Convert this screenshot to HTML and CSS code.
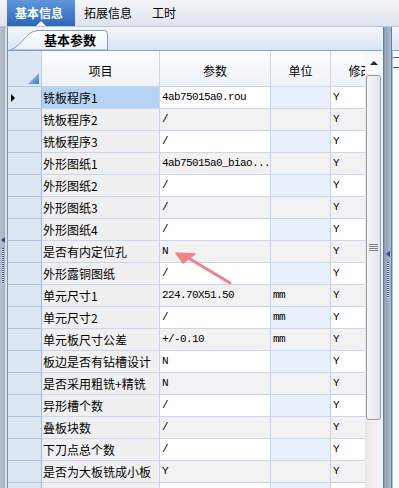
FILE: index.html
```html
<!DOCTYPE html>
<html lang="zh">
<head>
    <meta charset="UTF-8">
    <title>基本信息</title>
    <link rel="stylesheet" href="styles.css">
</head>
<body>
    <div class="topbar">
        <div class="tab on">基本信息</div>
        <div class="tab">拓展信息</div>
        <div class="tab">工时</div>
    </div>

    <div class="main">
        <div class="lsplit">
            <span class="grip-arrow"></span>
            <span class="grip-dots"></span>
        </div>

        <div class="panel">
            <div class="strip">
                <div class="subtab">
                    <svg class="subtab-bg" width="100" height="20" viewBox="0 0 100 20">
                        <defs>
                            <linearGradient id="tabfill" x1="0" y1="0" x2="0" y2="1">
                                <stop offset="0" stop-color="#ffffff"/>
                                <stop offset="1" stop-color="#edf2fa"/>
                            </linearGradient>
                        </defs>
                        <path d="M1,20 C8,18 14,10 20,4 Q24,0.5 29,0.5 L95,0.5 Q98.5,0.5 98.5,4 L98.5,20 Z" fill="url(#tabfill)" stroke="#7d9ccb" stroke-width="1"/>
                    </svg>
                    <span class="subtab-text">基本参数</span>
                </div>
            </div>

            <div class="gridwrap">
                <div class="grid">
                    <div class="row head">
                        <div class="cell rh corner"></div>
                        <div class="cell">项目</div>
                        <div class="cell">参数</div>
                        <div class="cell">单位</div>
                        <div class="cell">修改</div>
                    </div>

                    <div class="row sel">
                        <div class="cell rh"><span class="cur"></span></div>
                        <div class="cell name">铣板程序1</div>
                        <div class="cell val">4ab75015a0.rou</div>
                        <div class="cell unit"></div>
                        <div class="cell mod">Y</div>
                    </div>
                    <div class="row">
                        <div class="cell rh"></div>
                        <div class="cell name">铣板程序2</div>
                        <div class="cell val">/</div>
                        <div class="cell unit"></div>
                        <div class="cell mod">Y</div>
                    </div>
                    <div class="row">
                        <div class="cell rh"></div>
                        <div class="cell name">铣板程序3</div>
                        <div class="cell val">/</div>
                        <div class="cell unit"></div>
                        <div class="cell mod">Y</div>
                    </div>
                    <div class="row">
                        <div class="cell rh"></div>
                        <div class="cell name">外形图纸1</div>
                        <div class="cell val">4ab75015a0_biao...</div>
                        <div class="cell unit"></div>
                        <div class="cell mod">Y</div>
                    </div>
                    <div class="row">
                        <div class="cell rh"></div>
                        <div class="cell name">外形图纸2</div>
                        <div class="cell val">/</div>
                        <div class="cell unit"></div>
                        <div class="cell mod">Y</div>
                    </div>
                    <div class="row">
                        <div class="cell rh"></div>
                        <div class="cell name">外形图纸3</div>
                        <div class="cell val">/</div>
                        <div class="cell unit"></div>
                        <div class="cell mod">Y</div>
                    </div>
                    <div class="row">
                        <div class="cell rh"></div>
                        <div class="cell name">外形图纸4</div>
                        <div class="cell val">/</div>
                        <div class="cell unit"></div>
                        <div class="cell mod">Y</div>
                    </div>
                    <div class="row">
                        <div class="cell rh"></div>
                        <div class="cell name">是否有内定位孔</div>
                        <div class="cell val">N</div>
                        <div class="cell unit"></div>
                        <div class="cell mod">Y</div>
                    </div>
                    <div class="row">
                        <div class="cell rh"></div>
                        <div class="cell name">外形露铜图纸</div>
                        <div class="cell val">/</div>
                        <div class="cell unit"></div>
                        <div class="cell mod">Y</div>
                    </div>
                    <div class="row">
                        <div class="cell rh"></div>
                        <div class="cell name">单元尺寸1</div>
                        <div class="cell val">224.70X51.50</div>
                        <div class="cell unit">mm</div>
                        <div class="cell mod">Y</div>
                    </div>
                    <div class="row">
                        <div class="cell rh"></div>
                        <div class="cell name">单元尺寸2</div>
                        <div class="cell val">/</div>
                        <div class="cell unit">mm</div>
                        <div class="cell mod">Y</div>
                    </div>
                    <div class="row">
                        <div class="cell rh"></div>
                        <div class="cell name">单元板尺寸公差</div>
                        <div class="cell val">+/-0.10</div>
                        <div class="cell unit">mm</div>
                        <div class="cell mod">Y</div>
                    </div>
                    <div class="row">
                        <div class="cell rh"></div>
                        <div class="cell name">板边是否有钻槽设计</div>
                        <div class="cell val">N</div>
                        <div class="cell unit"></div>
                        <div class="cell mod">Y</div>
                    </div>
                    <div class="row">
                        <div class="cell rh"></div>
                        <div class="cell name">是否采用粗铣+精铣</div>
                        <div class="cell val">N</div>
                        <div class="cell unit"></div>
                        <div class="cell mod">Y</div>
                    </div>
                    <div class="row">
                        <div class="cell rh"></div>
                        <div class="cell name">异形槽个数</div>
                        <div class="cell val">/</div>
                        <div class="cell unit"></div>
                        <div class="cell mod">Y</div>
                    </div>
                    <div class="row">
                        <div class="cell rh"></div>
                        <div class="cell name">叠板块数</div>
                        <div class="cell val">/</div>
                        <div class="cell unit"></div>
                        <div class="cell mod">Y</div>
                    </div>
                    <div class="row">
                        <div class="cell rh"></div>
                        <div class="cell name">下刀点总个数</div>
                        <div class="cell val">/</div>
                        <div class="cell unit"></div>
                        <div class="cell mod">Y</div>
                    </div>
                    <div class="row">
                        <div class="cell rh"></div>
                        <div class="cell name">是否为大板铣成小板</div>
                        <div class="cell val">Y</div>
                        <div class="cell unit"></div>
                        <div class="cell mod">Y</div>
                    </div>
                    <div class="row">
                        <div class="cell rh"></div>
                        <div class="cell name"></div>
                        <div class="cell val"></div>
                        <div class="cell unit"></div>
                        <div class="cell mod"></div>
                    </div>

                    <!-- annotation arrow pointing at the N -->
                    <svg class="note-arrow" width="357" height="437" viewBox="0 0 357 437">
                        <line x1="222" y1="232" x2="182" y2="208" stroke="#ee8489" stroke-width="3" stroke-linecap="round"/>
                        <polygon points="168,202 187,203 175,212" fill="#ee8489" stroke="#ee8489" stroke-width="1.5" stroke-linejoin="round"/>
                    </svg>
                </div>

                <div class="vscroll">
                    <div class="sb-up"><span class="up-tri"></span></div>
                    <div class="sb-thumb">
                        <span class="sb-grip"></span>
                    </div>
                </div>
            </div>
        </div>

        <div class="rsplit">
            <span class="grip-arrow"></span>
            <span class="grip-dots"></span>
        </div>

        <div class="rpanel">
            <div class="rp-strip"></div>
            <div class="rp-body">
                <div class="rp-line"></div>
                <div class="rp-line"></div>
            </div>
        </div>
    </div>
</body>
</html>
```

FILE: styles.css
```css
body {
    margin: 0;
    width: 399px;
    height: 488px;
    overflow: hidden;
    font-family: "Noto Sans CJK SC", "Liberation Sans", sans-serif;
    font-size: 12px;
    color: #000;
    background: #dfe7f2;
}

/* top tab bar */
.topbar {
    display: flex;
    height: 26px;
    padding-left: 7px;
    border-bottom: 1px solid #bcc7d6;
    background: linear-gradient(#f3f5f9, #dde4ee);
}

.tab {
    position: relative;
    line-height: 26px;
    padding: 0 11px 0 9px;
}

.tab.on {
    width: 68px;
    box-sizing: border-box;
    padding: 0 0 0 8px;
    color: #fff;
    font-weight: bold;
    background: linear-gradient(#5f97dc, #2e66b7);
}

.tab.on::after {
    content: "";
    position: absolute;
    left: 29px;
    bottom: 0;
    border-left: 5px solid transparent;
    border-right: 5px solid transparent;
    border-bottom: 5px solid #f4f7fb;
}

.main {
    display: flex;
    height: 461px;
}

/* splitters */
.lsplit, .rsplit {
    display: flex;
    flex-direction: column;
    align-items: center;
    justify-content: center;
    gap: 5px;
}

.lsplit {
    width: 8px;
    padding-top: 6px;
    align-items: flex-start;
    box-sizing: border-box;
    background: linear-gradient(to right, #b6bfcb 0, #a7b1bf 5px, #d7dde5 5px, #d7dde5 7px, #8696ad 7px);
}

.lsplit .grip-arrow {
    margin-left: 1px;
}

.lsplit .grip-dots {
    margin-left: 2px;
}

.rsplit {
    width: 9px;
    box-sizing: border-box;
    padding-top: 33px;
    border-left: 1px solid #5a7fb6;
    border-right: 1px solid #5a7fb6;
    background: linear-gradient(to right, #8f9db2, #b1bbc8);
}

.grip-arrow {
    width: 0;
    height: 0;
    border-top: 3px solid transparent;
    border-bottom: 3px solid transparent;
    border-right: 4px solid #2f4d86;
}

.grip-dots {
    width: 2px;
    height: 36px;
    background: repeating-linear-gradient(#2f4d86 0, #2f4d86 1px, #e8edf4 1px, #e8edf4 2px);
}

/* centre panel */
.panel {
    width: 375px;
    box-sizing: border-box;
    border-right: 1px solid #eef3f9;
    display: flex;
    flex-direction: column;
}

.strip {
    height: 23px;
    display: flex;
    align-items: flex-end;
    padding-left: 1px;
    background: linear-gradient(#f4f7fc, #d9e4f3);
}

.subtab {
    position: relative;
    width: 100px;
    height: 20px;
}

.subtab-bg {
    position: absolute;
    left: 0;
    top: 0;
}

.subtab-text {
    position: relative;
    display: block;
    padding-left: 35px;
    line-height: 19px;
    font-size: 13px;
    font-weight: bold;
}

.gridwrap {
    flex: 1;
    display: flex;
    border-top: 1px solid #7c9fd0;
    background: #fff;
    overflow: hidden;
}

.grid {
    position: relative;
    width: 357px;
    overflow: hidden;
}

.row {
    display: grid;
    grid-template-columns: 34px 118px 111px 60px 60px;
    height: 22px;
}

.cell {
    box-sizing: border-box;
    border-right: 1px solid #c7d6ea;
    border-bottom: 1px solid #c7d6ea;
    padding-left: 2px;
    line-height: 21px;
    white-space: nowrap;
    overflow: hidden;
}

.head {
    height: 36px;
}

.head .cell {
    padding: 5px 0 0;
    line-height: 30px;
    text-align: center;
    background: linear-gradient(#fdfdfe, #eef2f7);
    border-right-color: #cdd8e6;
}

.cell.rh {
    padding: 0;
    background: #dce7f4;
    border-bottom-color: #b3c7e1;
    border-right-color: #a4bad8;
}

.head .cell.rh {
    position: relative;
    border-right-color: #c1cfe2;
}

.corner::after {
    content: "";
    position: absolute;
    right: 2px;
    bottom: 2px;
    width: 11px;
    height: 11px;
    background: linear-gradient(to bottom right, #cfe0f6, #3a72c2);
    clip-path: polygon(100% 0, 100% 100%, 0 100%);
}

.cur {
    display: inline-block;
    margin: 7px 0 0 3px;
    width: 0;
    height: 0;
    border-top: 4px solid transparent;
    border-bottom: 4px solid transparent;
    border-left: 4px solid #000;
    vertical-align: top;
}

.cell.name {
    padding-left: 1px;
    background: #f0f0f0;
}

.val, .unit, .mod {
    font-family: "Liberation Mono", monospace;
    font-size: 11px;
    letter-spacing: -0.6px;
}

.cell.unit {
    background: #e9f1fb;
}

.row:nth-child(odd):not(.head) .val,
.row:nth-child(odd):not(.head) .unit,
.row:nth-child(odd):not(.head) .mod {
    background: #f2f2f2;
}

.sel .cell.name {
    background: #b5d4f4;
}

.note-arrow {
    position: absolute;
    left: 0;
    top: 0;
    pointer-events: none;
}

/* vertical scrollbar */
.vscroll {
    width: 17px;
    display: flex;
    flex-direction: column;
    background: linear-gradient(to right, #e8e8e8, #f6f6f6);
}

.sb-up {
    height: 23px;
    display: flex;
    align-items: center;
    justify-content: center;
    background: #f7f8fa;
}

.up-tri {
    width: 0;
    height: 0;
    margin-top: 1px;
    border-left: 4px solid transparent;
    border-right: 4px solid transparent;
    border-bottom: 4px solid #222;
}

.sb-thumb {
    height: 345px;
    margin: 1px 0 0 1px;
    width: 15px;
    box-sizing: border-box;
    border: 1px solid #959da7;
    border-radius: 3px;
    background: linear-gradient(to right, #f5f6f7, #e2e5e9);
    display: flex;
    align-items: center;
    justify-content: center;
}

.sb-grip {
    width: 9px;
    height: 7px;
    background: repeating-linear-gradient(#7b838d 0, #7b838d 1px, transparent 1px, transparent 2px);
}

/* right panel edge */
.rpanel {
    width: 7px;
    display: flex;
    flex-direction: column;
}

.rp-strip {
    height: 23px;
    background: linear-gradient(#f4f7fc, #d9e4f3);
}

.rp-body {
    flex: 1;
    padding-top: 6px;
    border-top: 1px solid #7c9fd0;
    border-left: 1px solid #b8c4d4;
    background: #fbfcfe;
}

.rp-line {
    height: 9px;
    border-top: 1px solid #5b5f66;
}
```
